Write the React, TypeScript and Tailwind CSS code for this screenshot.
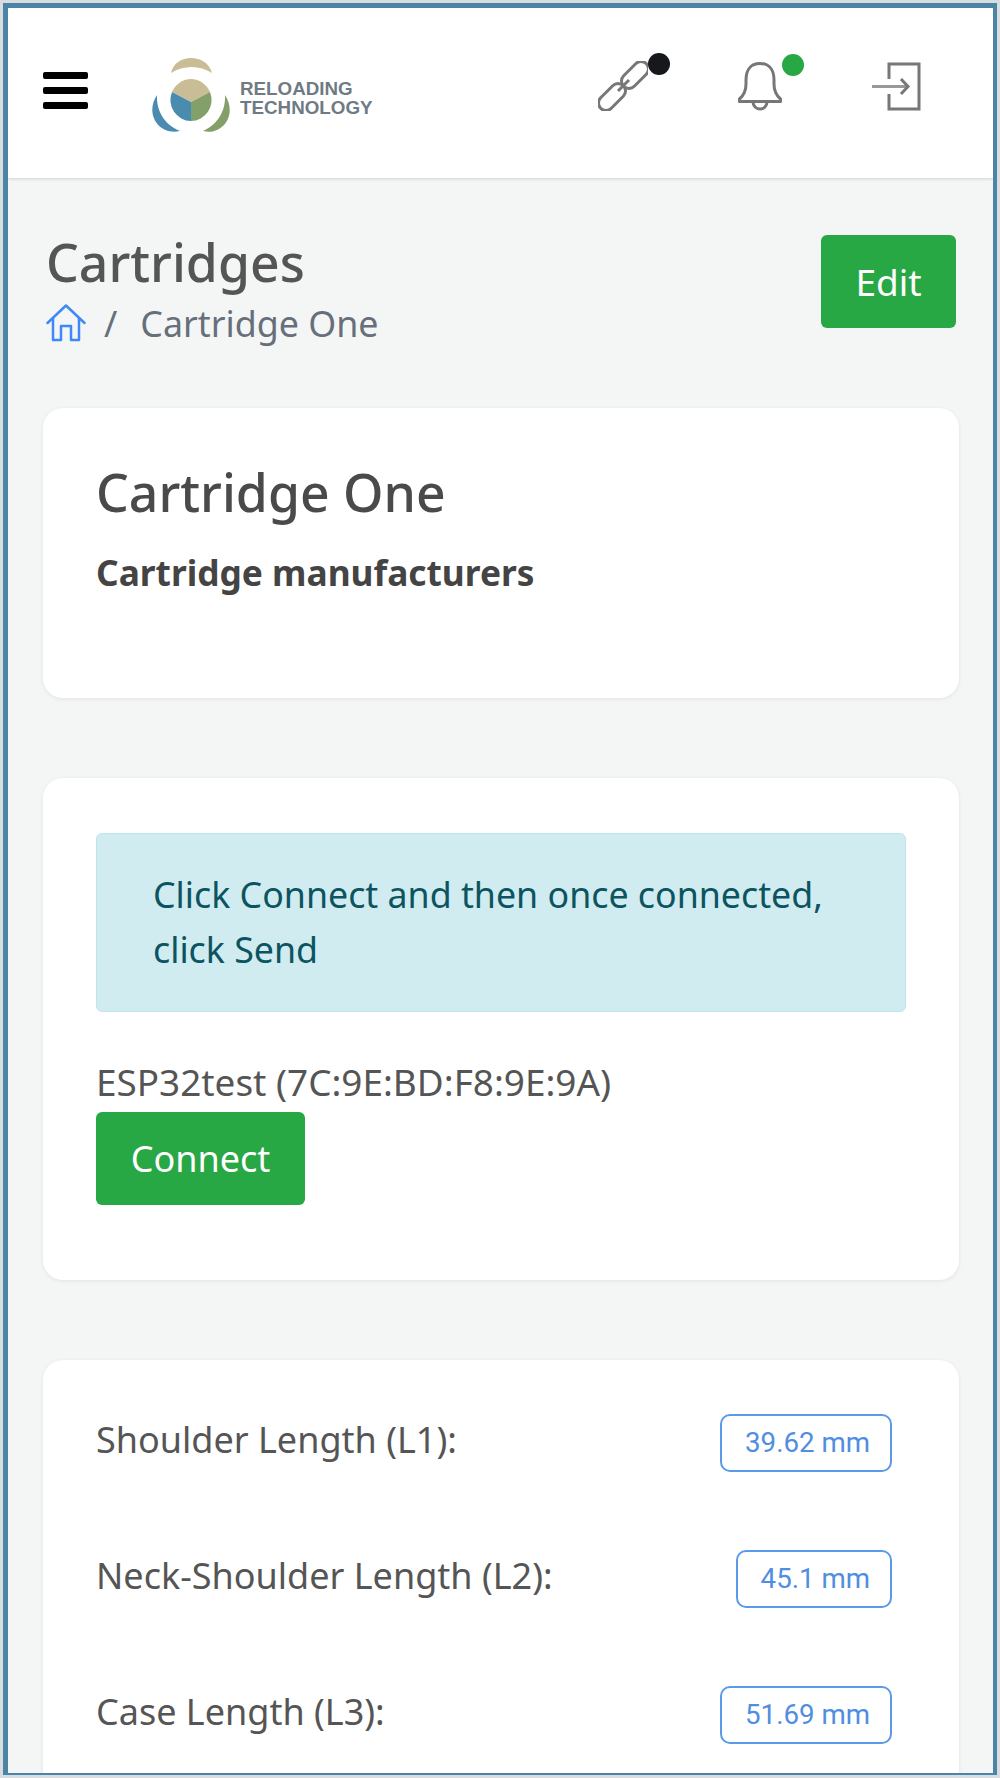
import React from 'react';

const measurements = [
  { label: 'Shoulder Length (L1):', value: '39.62 mm', width: 'w-[172px]' },
  { label: 'Neck-Shoulder Length (L2):', value: '45.1 mm', width: 'w-[156px]' },
  { label: 'Case Length (L3):', value: '51.69 mm', width: 'w-[172px]' },
];

const Logo = () => (
  <div className="flex items-center">
    <svg width="82" height="80" viewBox="0 0 82 80">
      <path d="M21 20 C25 0 57 0 62 20 C50 12 33 12 21 20 Z" fill="#c9bd96" />
      <path d="M41 26 A21 21 0 0 1 60 39 L41 49 L22 39 A21 21 0 0 1 41 26 Z" fill="#c9bd96" />
      <path d="M22 39 L41 49 L41 68 A21 21 0 0 1 22 39 Z" fill="#4a8bb0" />
      <path d="M60 39 L41 49 L41 68 A21 21 0 0 0 60 39 Z" fill="#84a06a" />
      <path d="M7 42 C-6 62 10 83 30 78 C17 73 6 60 7 42 Z" fill="#4a8bb0" />
      <path d="M75 42 C88 62 72 83 53 78 C65 73 76 60 75 42 Z" fill="#84a06a" />
    </svg>
    <div className="ml-[8px] mt-[9px] font-['Liberation_Sans',sans-serif] font-bold text-[18.8px] leading-[19px] text-[#6f7b84]">
      <div>RELOADING</div>
      <div>TECHNOLOGY</div>
    </div>
  </div>
);

const LinkIcon = () => (
  <svg width="50" height="50" viewBox="0 0 50 50" fill="none" stroke="#777777" strokeWidth="3">
    <rect x="-2" y="28.5" width="32" height="15" rx="7.5" transform="rotate(-45 14 36)" />
    <rect x="21" y="6.5" width="32" height="15" rx="7.5" transform="rotate(-45 37 14)" />
    <path d="M20 30 L31 19" />
  </svg>
);

const BellIcon = () => (
  <svg width="44" height="49" viewBox="0 0 44 49" fill="none" stroke="#777777" strokeWidth="3" strokeLinejoin="round">
    <path d="M22 1.5 C12 1.5 8 9 8 18 V22 C8 30 5 34 1.5 37 V39.5 H42.5 V37 C39 34 36 30 36 22 V18 C36 9 32 1.5 22 1.5 Z" />
    <path d="M15 40 A7 7 0 0 0 29 40" />
  </svg>
);

const ExitIcon = () => (
  <svg width="49" height="49" viewBox="0 0 49 49" fill="none" stroke="#777777" strokeWidth="3">
    <path d="M17 17 V2 H47 V47 H17 V32" />
    <path d="M0 24.5 H35" stroke="#999999" />
    <path d="M29 17 L36 24.5 L29 32" />
  </svg>
);

const HomeIcon = () => (
  <svg width="40" height="38" viewBox="0 0 40 38" fill="none" stroke="#3f88f8" strokeWidth="2.5" strokeLinejoin="round" className="shrink-0">
    <path d="M1.5 19 L20 1.5 L38.5 19" strokeLinecap="round" />
    <path d="M7 14 V36 H15 V22 H25 V36 H33 V14" />
  </svg>
);

const Dot = ({ color }: { color: string }) => (
  <span className={`absolute -top-[8px] -right-[22px] w-[22px] h-[22px] rounded-full ${color}`} />
);

export default function App() {
  return (
    <div className="h-[1778px] overflow-hidden bg-[#d9dde0] p-[3px] font-['Noto_Sans',sans-serif]">
      <div className="h-[1772px] overflow-hidden border-t-[5px] border-l-[5px] border-r-[4px] border-b-[2px] border-[#4a84a6] bg-[#f4f6f6]">
        <header className="h-[170px] bg-white shadow-[0_1px_3px_rgba(0,0,0,0.15)] flex items-center pl-[35px] pr-[72px]">
          <div className="w-[45px] mb-[5px] flex flex-col gap-[8px]">
            <span className="h-[7px] rounded-[2px] bg-black" />
            <span className="h-[7px] rounded-[2px] bg-black" />
            <span className="h-[7px] rounded-[2px] bg-black" />
          </div>
          <div className="ml-[62px]"><Logo /></div>
          <div className="ml-auto mb-[14px] flex items-center gap-[90px]">
            <div className="relative"><LinkIcon /><Dot color="bg-[#17181c]" /></div>
            <div className="relative"><BellIcon /><Dot color="bg-[#28a745]" /></div>
            <ExitIcon />
          </div>
        </header>

        <main className="pl-[35px] pr-[34px]">
          <div className="flex justify-between items-start pt-[57px]">
            <div className="pl-[3px]">
              <h1 className="-mt-[3px] text-[51.7px] leading-[60px] font-medium text-[#555555]">Cartridges</h1>
              <div className="mt-[9px] flex items-center text-[#666f7a] text-[35.8px] leading-[44px]">
                <HomeIcon />
                <span className="ml-[18px] mr-[23px]">/</span>
                <span>Cartridge One</span>
              </div>
            </div>
            <button className="mr-[3px] w-[135px] h-[93px] rounded-[6px] bg-[#28a745] text-white text-[37px]">Edit</button>
          </div>

          <section className="mt-[63px] h-[290px] rounded-[20px] bg-white shadow-[0_1px_4px_rgba(0,0,0,0.08)] px-[53px] pt-[53px]">
            <h2 className="text-[51.7px] leading-[62px] font-medium text-[#4a4a4a]">Cartridge One</h2>
            <p className="mt-[27px] text-[35.3px] leading-[44px] font-bold text-[#444444]">Cartridge manufacturers</p>
          </section>

          <section className="mt-[80px] h-[502px] rounded-[20px] bg-white shadow-[0_1px_4px_rgba(0,0,0,0.08)] px-[53px] pt-[55px]">
            <div className="h-[179px] rounded-[6px] bg-[#d1ecf1] border border-[#bee5eb] text-[#0c5460] text-[35.75px] leading-[55px] px-[56px] pt-[33px]">
              Click Connect and then once connected, click Send
            </div>
            <p className="mt-[45px] text-[36.9px] leading-[50px] text-[#555555]">ESP32test (7C:9E:BD:F8:9E:9A)</p>
            <button className="mt-[5px] w-[209px] h-[93px] rounded-[6px] bg-[#28a745] text-white text-[36px]">Connect</button>
          </section>

          <section className="mt-[80px] h-[500px] rounded-t-[20px] bg-white shadow-[0_1px_4px_rgba(0,0,0,0.08)] pl-[53px] pr-[67px] pt-[54px] flex flex-col gap-[78px]">
            {measurements.map((m) => (
              <div key={m.label} className="flex items-center justify-between h-[58px]">
                <span className="text-[36px] mb-[6px] text-[#555555]">{m.label}</span>
                <span className={`${m.width} h-[58px] flex items-center justify-end pr-[20px] rounded-[10px] border-2 border-[#5a9ae8] text-[#4f8ee0] text-[27.7px] font-['Roboto',sans-serif]`}>{m.value}</span>
              </div>
            ))}
          </section>
        </main>
      </div>
    </div>
  );
}
